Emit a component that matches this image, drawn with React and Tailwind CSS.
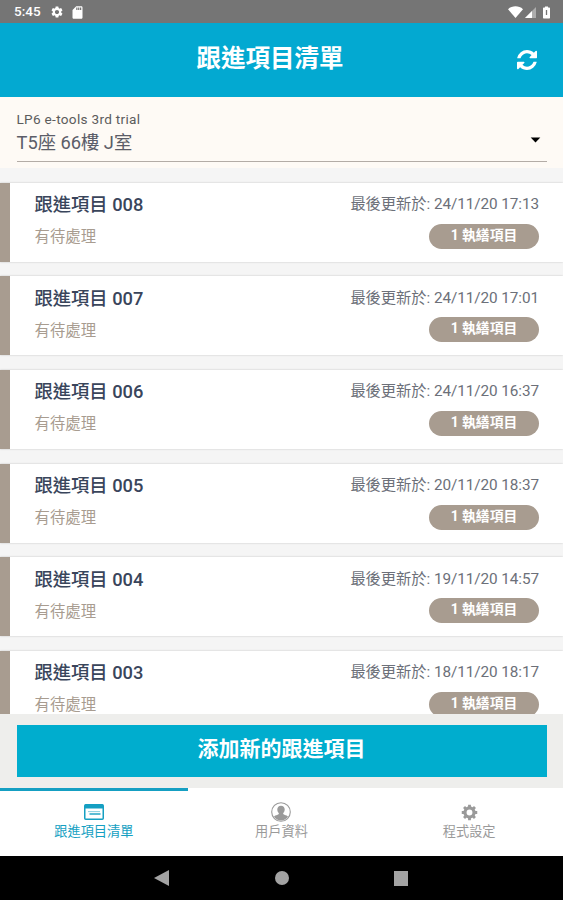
import { useState } from 'react'
import { MdSettings, MdSdCard, MdArrowDropDown } from 'react-icons/md'

const items = [
  { id: '008', updated: '24/11/20 17:13' },
  { id: '007', updated: '24/11/20 17:01' },
  { id: '006', updated: '24/11/20 16:37' },
  { id: '005', updated: '20/11/20 18:37' },
  { id: '004', updated: '19/11/20 14:57' },
  { id: '003', updated: '18/11/20 18:17' },
]

function StatusBar() {
  return (
    <div className="h-[23px] shrink-0 bg-[#757575] text-white flex items-center pt-px pl-[14px] pr-[13px]">
      <span className="text-[13.5px] font-medium leading-none w-[27px] whitespace-nowrap">5:45</span>
      <MdSettings className="w-[14px] h-[14px] ml-[9px]" />
      <MdSdCard className="w-[15px] h-[15px] ml-[6px]" />
      <svg className="ml-auto w-[15px] h-[12px]" viewBox="0 0 15 12" fill="currentColor">
        <path d="M0 3.2C4.2-.6 10.8-.6 15 3.2L7.5 12z" />
      </svg>
      <svg className="ml-[2px] w-[11px] h-[11px]" viewBox="0 0 11 11" fill="currentColor">
        <path d="M11 0v11H0z" opacity=".4" />
        <path d="M7 4v7H0z" />
      </svg>
      <svg className="ml-[7px] w-[7px] h-[13px]" viewBox="0 0 7 12">
        <path d="M2 0h3v1h1.3q.7 0 .7.7v9.6q0 .7-.7.7H.7q-.7 0-.7-.7V1.7Q0 1 .7 1H2z" fill="#fff" />
        <path d="M3.5 3.500v5" stroke="#757575" strokeWidth="1.3" />
      </svg>
    </div>
  )
}

function RefreshIcon({ className }) {
  return (
    <svg className={className} viewBox="0 0 1536 1536" fill="currentColor">
      <path d="M1511 928q0 5-1 7-64 268-268 434.5t-478 166.500q-146 0-282.500-55t-243.500-157l-129 129q-19 19-45 19t-45-19-19-45v-448q0-26 19-45t45-19h448q26 0 45 19t19 45-19 45l-137 137q71 66 161 102t187 36q134 0 250-65t186-179q11-17 53-117 8-23 30-23h192q13 0 22.500 9.500t9.500 22.500zm25-800v448q0 26-19 45t-45 19h-448q-26 0-45-19t-19-45 19-45l138-138q-148-137-349-137-134 0-250 65t-186 179q-11 17-53 117-8 23-30 23h-199q-13 0-22.500-9.500t-9.500-22.500v-7q65-268 270-434.500t480-166.500q146 0 284 55.500t245 156.500l130-129q19-19 45-19t45 19 19 45z" />
    </svg>
  )
}

function Header() {
  return (
    <header className="h-[74px] shrink-0 bg-[#03a9d1] text-white grid grid-cols-[1fr_auto_1fr] items-center px-[26px]">
      <h1 className="col-start-2 text-[24.5px] font-bold leading-none -mr-px -mt-[2px] -translate-x-[12px] whitespace-nowrap">跟進項目清單</h1>
      <button className="justify-self-end">
        <RefreshIcon className="w-[20px] h-[20px]" />
      </button>
    </header>
  )
}

function UnitSelect() {
  return (
    <div className="h-[71px] shrink-0 bg-[#fefaf5] px-[16.5px] pt-[15px]">
      <div className="h-[50px] border-b border-[#b3aca6]">
        <div className="text-[13.6px] tracking-[0.3px] leading-[15px] text-[#5c5c5c]">LP6 e-tools 3rd trial</div>
        <div className="flex items-center justify-between text-[18.3px] leading-[31px] text-[#5b5d68]">
          <span>T5座 66樓 J室</span>
          <MdArrowDropDown className="w-[23px] h-[23px] text-black -mt-[6px]" />
        </div>
      </div>
    </div>
  )
}

function Card({ item }) {
  return (
    <li className="h-[79px] shrink-0 flex justify-between bg-white border-l-[10.5px] border-[#a89c90] pl-[24.5px] pr-[24px] shadow-[0_0_2px_rgba(0,0,0,0.2)]">
      <div className="pt-[9.5px]">
        <div className="text-[18.3px] font-medium leading-[26px] text-[#39455b]">跟進項目 {item.id}</div>
        <div className="mt-[8px] text-[15.4px] leading-[22px] text-[#a89c90]">有待處理</div>
      </div>
      <div className="pt-[9.5px] flex flex-col items-end">
        <div className="text-[15.3px] tracking-[-0.07px] leading-[25px] text-[#6c7079]">最後更新於: {item.updated}</div>
        <div className="mt-[6.5px] w-[110px] h-[25px] rounded-full bg-[#a89c90] text-center text-[13.8px] font-bold leading-[23px] text-white">1 執繕項目</div>
      </div>
    </li>
  )
}

function ListIcon({ className }) {
  return (
    <svg className={className} viewBox="0 0 20 16">
      <rect x=".75" y=".75" width="18.5" height="14.5" rx="1" fill="none" stroke="currentColor" strokeWidth="1.5" />
      <path d="M1 .5h18v4H1z" fill="currentColor" />
      <path d="M4 7.6h12" stroke="currentColor" strokeWidth="1" opacity=".5" />
      <path d="M5.500 10h11" stroke="currentColor" strokeWidth="1.400" />
    </svg>
  )
}

function UserIcon({ className }) {
  return (
    <svg className={className} viewBox="0 0 20 20">
      <circle cx="10" cy="10" r="9.3" fill="none" stroke="currentColor" strokeWidth="1.1" />
      <path d="M10 3.800c2.300 0 3.800 1.600 3.700 3.900-.1 1.600-.7 2.600-1.500 3.400-.2.900.2 1.300 1.200 1.700 1.700.6 3 1 3.600 2a8.600 8.600 0 0 1-14 0c.6-1 1.900-1.400 3.600-2 1-.4 1.400-.8 1.200-1.700-.8-.8-1.400-1.800-1.500-3.400C6.200 5.400 7.700 3.800 10 3.800z" fill="currentColor" />
    </svg>
  )
}

function GearIcon({ className }) {
  return (
    <svg className={className} viewBox="0 0 18 18" stroke="currentColor" fill="none">
      <circle cx="9" cy="9" r="4.800" strokeWidth="3.400" />
      <path d="M9 .8v3M9 14.200v3M.8 9h3M14.200 9h3M3.200 3.200l2.100 2.100M12.700 12.700l2.100 2.100M3.200 14.800l2.100-2.100M12.700 5.300l2.100-2.100" strokeWidth="3" />
    </svg>
  )
}

const tabs = [
  { label: '跟進項目清單', icon: ListIcon, iconClass: 'w-[20px] h-[16px]' },
  { label: '用戶資料', icon: UserIcon, iconClass: 'w-[20px] h-[20px]' },
  { label: '程式設定', icon: GearIcon, iconClass: 'w-[17px] h-[17px]' },
]

function TabBar() {
  const [active, setActive] = useState(0)

  return (
    <nav className="h-[68px] shrink-0 grid grid-cols-3 bg-white">
      {tabs.map((t, i) => (
        <button
          key={t.label}
          onClick={() => setActive(i)}
          className={`flex flex-col items-center border-t-[3.5px] pt-[10px] ${active === i ? 'border-[#159fc2] text-[#159fc2]' : 'border-transparent text-[#9a9a9a]'}`}
        >
          <span className="h-[22px] flex items-center justify-center">
            <t.icon className={t.iconClass} />
          </span>
          <span className="text-[13.2px] leading-[18px]">{t.label}</span>
        </button>
      ))}
    </nav>
  )
}

function SystemNav() {
  return (
    <div className="h-[44px] shrink-0 bg-black text-[#a3a3a3] flex items-center pl-[154px]">
      <svg className="w-[15px] h-[16px]" viewBox="0 0 15 16" fill="currentColor"><path d="M15 0v16L0 8z" /></svg>
      <div className="ml-[106px] w-[14px] h-[14px] rounded-full bg-[#a3a3a3]" />
      <div className="ml-[105px] w-[14px] h-[15px] bg-[#a3a3a3]" />
    </div>
  )
}

export default function App() {
  return (
    <div className="w-full h-screen flex flex-col overflow-hidden font-[Roboto,'Noto_Sans_CJK_TC',sans-serif]">
      <StatusBar />
      <Header />
      <UnitSelect />
      <ul className="flex-1 min-h-0 overflow-hidden flex flex-col gap-[14.7px] pt-[14.5px] bg-[#f5f5f5]">
        {items.map(item => <Card key={item.id} item={item} />)}
      </ul>
      <div className="h-[74px] shrink-0 bg-[#eeeeec] px-[16.5px] pt-[11px]">
        <button className="w-full h-[52px] pb-[3px] bg-[#00adce] text-white text-[21px] font-bold leading-none">添加新的跟進項目</button>
      </div>
      <TabBar />
      <SystemNav />
    </div>
  )
}
